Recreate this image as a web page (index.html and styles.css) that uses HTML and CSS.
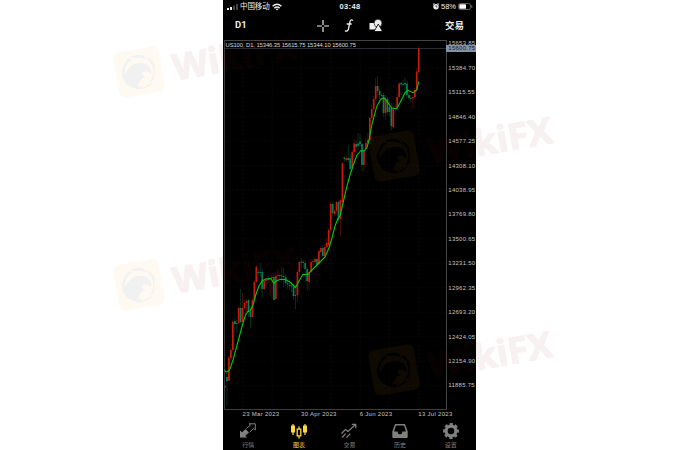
FILE: index.html
```
<!DOCTYPE html>
<html lang="zh-CN">

<head>
  <meta charset="UTF-8">
  <meta name="viewport" content="width=device-width, initial-scale=1.0">
  <title>US100, D1</title>
  <link rel="stylesheet" href="styles.css">
</head>

<body>
  <main>
    <header class="status">
      <div class="carrier">
        <svg width="11" height="7" viewBox="0 0 11 7"><path d="M0 5h2v2H0zM3 4h2v3H3z" fill="#eee"/><path d="M6 2.500h2v4.500H6zM9 1h2v6H9z" fill="#444"/></svg>
        <span>中国移动</span>
        <svg width="10" height="8" viewBox="0 0 10 8" fill="none" stroke="#eee" stroke-width="1.500"><path d="M.6 3.200Q5-.8 9.400 3.200M2.400 5.100Q5 2.800 7.600 5.100"/><path d="M3.700 6.100Q5 5.100 6.300 6.100L5 7.600z" fill="#eee" stroke="none"/></svg>
      </div>
      <time>03:48</time>
      <div class="power">
        <svg width="6" height="7" viewBox="0 0 6 7"><circle cx="3" cy="3.700" r="2.700" fill="#eee"/><path d="M0 1.500 1.500.3M6 1.500 4.500.3" stroke="#eee"/><path d="M3 2.200v1.700h1.300" stroke="#000" stroke-width=".7" fill="none"/></svg>
        <span>58%</span>
        <svg width="15" height="7" viewBox="0 0 15 7"><rect x=".5" y=".5" width="12" height="6" rx="1.800" fill="none" stroke="#777" stroke-width=".8"/><rect x="1.300" y="1.300" width="6.700" height="4.400" rx=".8" fill="#fff"/><path d="M13.800 2.300v2.400" stroke="#777"/></svg>
      </div>
    </header>

    <nav class="toolbar">
      <b class="period">D1</b>
      <svg width="12" height="12" viewBox="0 0 12 12" stroke="#eee" stroke-width="1.200"><path d="M6 0v5M6 7v5M0 6h5M7 6h5"/></svg>
      <svg width="10" height="13" viewBox="0 0 10 13" fill="none" stroke="#eee" stroke-width="1.300"><path d="M9 1.500C7.500.2 6.300 1 5.900 3L4.500 9.800C4.100 11.900 2.700 12.800 1 11.600M2.700 5h5"/></svg>
      <svg width="14" height="13" viewBox="0 0 14 13" fill="#eee"><path d="M.5 4h6.500v6.500H.5z"/><circle cx="9" cy="4.200" r="3.900" stroke="#000" stroke-width=".6"/><path d="m9.300 5 4.200 7.500H5z" stroke="#000" stroke-width=".8"/></svg>
      <b class="trade">交易</b>
    </nav>

    <section class="chart">
      <div class="plot">
        <svg id="candles" width="223" height="370" viewBox="224 40 223 370"></svg>
        <p class="legend">US100, D1, 15346.35 15615.75 15344.10 15600.75</p>
      </div>
      <div class="axis">
        <span>15653.85</span>
        <span>15384.70</span>
        <span>15115.55</span>
        <span>14846.40</span>
        <span>14577.25</span>
        <span>14308.10</span>
        <span>14038.95</span>
        <span>13769.80</span>
        <span>13500.65</span>
        <span>13231.50</span>
        <span>12962.35</span>
        <span>12693.20</span>
        <span>12424.05</span>
        <span>12154.90</span>
        <span>11885.75</span>
        <b class="price">15600.75</b>
      </div>
    </section>

    <div class="dates">
      <span>23 Mar 2023</span>
      <span>30 Apr 2023</span>
      <span>6 Jun 2023</span>
      <span>13 Jul 2023</span>
    </div>

    <nav class="tabs">
      <a>
        <svg width="16" height="16" viewBox="0 0 16 16" fill="currentColor"><path d="M0 14.500V7.500l2 1.800L5.500 6l3.500 3.500L5.300 12.700 7.200 14.500z"/><path d="M6.500 5.500 10.500 2 9 .8h6.300V7l-1.600-1.500L9.800 9" fill="none" stroke="currentColor"/></svg>
        <span>行情</span>
      </a>
      <a class="active">
        <svg width="16" height="16" viewBox="0 0 16 16" fill="currentColor"><path d="M0 2.500h1.400V1h1.200v1.500H4v7H2.600V12H1.400V9.500H0zM12 2.500h1.400V1h1.200v1.500H16v7h-1.400V12h-1.200V9.500H12z"/><path d="M6.200 6.200h3.600v6.600H6.200zM8 3.500v2.700M8 12.800V15.500" fill="none" stroke="currentColor" stroke-width="1.300"/></svg>
        <span>图表</span>
      </a>
      <a>
        <svg width="16" height="16" viewBox="0 0 16 16" fill="none" stroke="currentColor" stroke-width="1.200"><path d="m.5 10.500 4-4 2.500 2L14.500 1.500M10.800 1.300h4v4M1 14.500l3.800-3.800M5.500 14.500l3.800-3.800"/></svg>
        <span>交易</span>
      </a>
      <a>
        <svg width="16" height="16" viewBox="0 0 16 16" fill="currentColor" fill-rule="evenodd"><path d="M3 1h10l2.700 7.500v5.300q0 1.200-1.200 1.200h-13Q.3 15 .3 13.800V8.500zM4 2.500 2 8.500h3.500q.2 2.700 2.500 2.700t2.500-2.700H14l-2-6z"/></svg>
        <span>历史</span>
      </a>
      <a>
        <svg width="16" height="16" viewBox="0 0 16 16" fill="none" stroke="currentColor"><circle cx="8" cy="8" r="4.900" stroke-width="3.200"/><circle cx="8" cy="8" r="7" stroke-width="1.900" stroke-dasharray="3.300 2.198" stroke-dashoffset="1.650"/></svg>
        <span>设置</span>
      </a>
    </nav>
  </main>

  <svg width="0" height="0" class="defs">
    <mask id="blades" maskUnits="userSpaceOnUse" x="0" y="0" width="48" height="48">
      <path d="M0 0h48v48H0z" fill="#fff"/>
      <path d="M13 7l15 5M30 5l8 15M42 18l-4 17M39 34l-15 6M5 21l8-11" stroke="#000" stroke-width="1.500"/>
    </mask>
    <g id="bird">
      <circle cx="24" cy="24" r="15.800" fill="none" stroke="#000" stroke-width="2.800" mask="url(#blades)"/>
      <path d="M8 26 13 20Q18 14.500 25 15q7 .5 10 5.500 2.500 4 .5 7.500-2-3.500-6-3.500-3 0-2.500 2.500.5 2 3 3.500-5-.5-7 3-2 4.500-6 5l-5-3-3-5z"/>
    </g>
    <mask id="cut" maskUnits="userSpaceOnUse" x="0" y="0" width="48" height="48">
      <path d="M0 0h48v48H0z" fill="#fff"/>
      <use href="#bird"/>
    </mask>
    <symbol id="mark" viewBox="0 0 190 48">
      <rect class="badge" x="1" y="1" width="46" height="46" rx="6" mask="url(#cut)"/>
      <use class="bird" href="#bird"/>
      <text class="brand" x="58" y="38.500" textLength="126" lengthAdjust="spacingAndGlyphs">WikiFX</text>
    </symbol>
  </svg>
  <svg class="mark upper left"><use href="#mark"/></svg>
  <svg class="mark lower left"><use href="#mark"/></svg>
  <svg class="mark upper right"><use href="#mark"/></svg>
  <svg class="mark lower right"><use href="#mark"/></svg>

  <script src="chart.js"></script>
</body>

</html>
```
FILE: styles.css
```
body {
  margin: 0;
  position: relative;
  block-size: 450px;
  overflow: hidden;
  background-color: #fff;
  font-family: "Liberation Sans", "Noto Sans CJK SC", sans-serif;
}

main {
  display: flex;
  flex-direction: column;
  inline-size: 253px;
  block-size: 450px;
  margin-inline-start: 223px;
  overflow: hidden;
  background-color: #000;
  color: #eee;
}

svg {
  display: block;
  flex: none;
}

.status {
  display: grid;
  grid-template-columns: 1fr auto 1fr;
  align-items: center;
  block-size: 13px;
  padding-inline: 4px 3px;
  font-size: 7.5px;
  line-height: 12px;

  & time {
    font-weight: 700;
    letter-spacing: 0.4px;
  }
}

.carrier,
.power {
  display: flex;
  align-items: center;
  gap: 2px;
}

.carrier span {
  letter-spacing: -0.1px;
}

.power {
  justify-content: end;
}

.toolbar {
  display: flex;
  align-items: center;
  box-sizing: border-box;
  block-size: 27px;
  padding-inline: 12px;
  padding-block-end: 2px;
  font-size: 9.5px;

  & svg {
    margin-inline-end: 15px;
  }
}

.period {
  inline-size: 82px;
  font-family: Roboto, sans-serif;
  padding-block-end: 3px;
}

.trade {
  margin-inline-start: auto;
  line-height: 12px;
}

.chart {
  display: flex;
  block-size: 370px;
  margin-inline-start: 1px;
}

.plot {
  position: relative;
}

.legend {
  position: absolute;
  inset: 2px auto auto 1.5px;
  margin: 0;
  font-size: 5.8px;
  line-height: 6px;
  letter-spacing: -0.06px;
  white-space: nowrap;
  color: #ddd;
}

.axis {
  position: relative;
  inline-size: 29px;
  font-size: 6px;
  letter-spacing: 0.25px;
  color: #c4c4c4;

  & span {
    display: flex;
    align-items: center;
    block-size: 24.45px;
    padding-inline-start: 1.3px;
  }

  & span:first-child {
    margin-block-start: -8.9px;
  }
}

.price {
  position: absolute;
  inset: 5px 0 auto -1px;
  padding-inline-start: 2.3px;
  line-height: 7px;
  font-weight: 400;
  background-color: #8293a6;
  color: #18212b;
}

.dates {
  display: grid;
  grid-template-columns: repeat(4, 58.6px);
  padding-inline-start: 19.5px;
  font-size: 6px;
  line-height: 9px;
  letter-spacing: 0.3px;
  white-space: nowrap;
  color: #c4c4c4;
}

.tabs {
  display: grid;
  grid-template-columns: repeat(5, 50.6px);
  flex: 1;
  padding-block-start: 4px;
  font-size: 6px;
  line-height: 8px;
  color: #808080;

  & a {
    display: flex;
    flex-direction: column;
    align-items: center;
    gap: 2px;
  }

  & .active {
    color: #ffd83d;
  }
}

.defs {
  position: absolute;
}

/* Watermarks lie over both the page and the phone */
.mark {
  position: absolute;
  inline-size: 190px;
  block-size: 48px;
  overflow: visible;
  transform: rotate(-10deg);
  transform-origin: 24px 24px;
}

.left {
  left: 115px;
}

.right {
  left: 370px;
}

.upper.left {
  top: 48px;
}

.lower.left {
  top: 261px;
}

.upper.right {
  top: 132px;
}

.lower.right {
  top: 346px;
}

.badge {
  fill: #f0a818;
  fill-opacity: 0.06;
}

.bird {
  opacity: 0.055;
}

.brand {
  font: 700 36px "Open Sans", sans-serif;
  fill: #781a12;
  stroke: #781a12;
  stroke-width: 1.4;
  stroke-linejoin: round;
  opacity: 0.06;
}

.grid {
  stroke: #0d0d0d;
  stroke-width: 0.6;
  stroke-dasharray: 2 2;
}

.frame {
  fill: none;
  stroke: #555;
  stroke-width: 0.8;
}

.bid {
  stroke: #3a424b;
  stroke-width: 0.7;
}

.up {
  fill: #c81a0c;
}

.down {
  fill: #078058;
}

.wick {
  opacity: 0.45;
}

.average {
  fill: none;
  stroke: #08c808;
  stroke-width: 1.1;
}
```
FILE: chart.js
```
// direction, high, body top, body bottom, low
const bars = `
u 385 386 387.500 387.500|d 370 377 381 405|u 356 357.700 380.700 381|u 348 350 358 360|u 320 321.700 350 352|d 318 321 324 332|d 320 323 324 333|u 306 308 323 324
d 289 308 322 324|u 293 308 322 323|u 300 303 308 310|u 299 301 303 315|d 299 300 312 317|d 308 312 317 328|u 298 300 317 318|u 280 282 300 302
u 265 267 282 283|d 269 272 273 276|d 263 272 273 277|d 268 272 289 298|u 279 281 289 290|u 278 280 281 286|d 275 278 280 284|u 275 278 279 296
u 274 277 278 298|d 273 277 300 300|u 272 276 299 300|u 270 275 276 281|d 273 275 276 279|d 267 275.500 276.500 281|d 268 276 277 287|d 274 277 283 286
d 280 283 284.500 289|d 279 285 286 290|d 282 285.500 286.500 292|d 284 286.500 296 300|d 288 295 296 309|u 270 272 295 302|u 261 262 272 275|d 258 261.500 262.500 268
d 260 262 263 268|d 260 263 269 282|d 267 269 281 291|u 270 272 282 290|u 260 262 272 273|u 259 261 262 265|u 257 259 262 264|d 258 259 265 267
u 249 251 264 266|u 246 248 252 253|d 245 248 256 257|u 244 247 256 258|u 238 243 247 248|u 228 230 245 247|u 202 204 230 232|d 202 204 213 216
u 209 211 214 216|u 201 202 211 214|d 201 202 220 222|u 199 200 219 236|u 162 163.500 202 204|d 157 157.500 159 162|u 156 158 160 162|d 145 158 160 163
d 154 158.500 169 172|u 150 152 168 170|u 140 143.500 152 154|d 140 144 147 149|d 133 143.500 146 150|d 134 141.500 144 147|d 143 144 165 171|u 147 150 165 172
u 138 143 149 150|u 133 140 143 145|u 116 118 140 142|u 105 109 118 120|u 96 99 109 111|u 78 86 99 101|d 76 86 91 97|d 89 91 95 99
d 93 95 96 99|d 93 95 113 117|u 95 98 113 120|d 97 99 112 115|d 101 107 112 116|d 103 108 126 130|u 103 108 127 129|u 104 108 109 113
u 93 97 108 110|u 82 83.500 97 99|d 82 83 84.500 87|d 80 84 85 87|d 77 83 84.500 91|d 81 83.500 95 98|d 93 95 98 100|d 95 98 99 102
u 95 97 98.500 108|u 88 90 97 99|u 68 71.500 90 92|u 47 48.500 72 73`.trim().split(/[|\n]/).map(row => row.split(' '));

const average = '224,370 226,372 228,371.500 230,369 233,360 236,349 240,334 243,323 246,314 248,311.500 250,311 253,305 256,294 259,286 262,281 266,279 271,278.500 273,282 274,283.500 277,280.500 281,279.300 285,279.500 290,282 293,285 295.500,287.500 299,281 303,274.300 308,274.500 312,270 316,266 320,262 325,257 329,248 332,238 335,226 338,218.500 340,216 343.300,202 346.700,187 350,175 353.300,165 357,155 361,150.500 364,151 367,147.500 369,140 372,124 376.700,106.700 380.700,99.300 384,98 387,101.700 391.700,108 396.700,108.700 400,102.700 405,92.700 408,90.300 413,92.700 416.700,90 418.700,81.700';

let svg = '<g class="grid">';
for (let i = 0; i < 7; i++) {
  const x = 242.7 + i * 29.33;
  svg += `<path d="M${x} 41V410"/>`;
}
for (let i = 1; i < 15; i++) {
  const y = 43.3 + i * 24.45;
  svg += `<path d="M224 ${y}H446"/>`;
}
svg += '</g><path class="bid" d="M224 48.500H446"/>';

// One daily bar every 1.957px
bars.forEach(([dir, high, top, bottom, low], i) => {
  const x = 225 + i * 1.957;
  svg += `<g class="${dir === 'u' ? 'up' : 'down'}">
    <rect class="wick" x="${x - 0.4}" y="${high}" width=".8" height="${low - high}"/>
    <rect x="${x - 0.85}" y="${top}" width="1.7" height="${bottom - top}"/>
  </g>`;
});

svg += `<polyline class="average" points="${average}"/>`;
svg += '<path class="frame" d="M224.400 40.500H446.500V409.600H224.400z"/>';
document.querySelector('#candles').innerHTML = svg;
```
